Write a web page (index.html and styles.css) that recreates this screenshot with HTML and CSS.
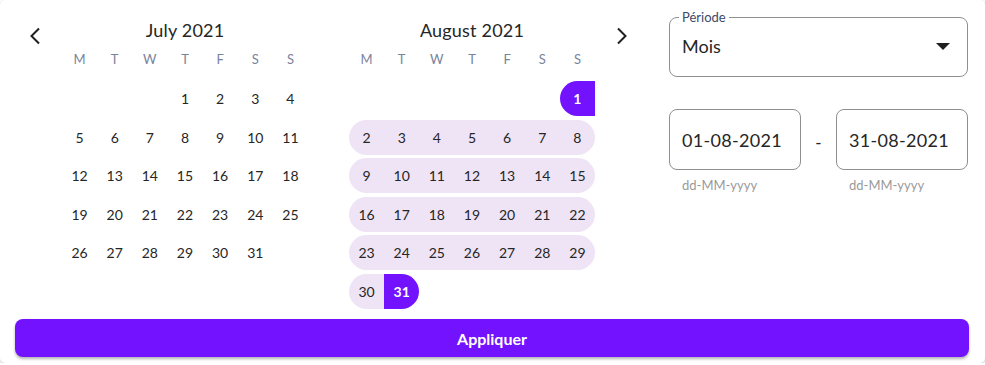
FILE: index.html
```html
<!DOCTYPE html>
<html lang="fr">
<head>
<meta charset="utf-8">
<title>Période</title>
<link rel="stylesheet" href="styles.css">
</head>
<body>
<div class="card">
  <div class="top">
    <button class="nav nav-prev" aria-label="Mois précédent">
      <svg width="12" height="18" viewBox="0 0 12 18"><path d="M10 1.5 L2.5 9 L10 16.5" fill="none" stroke="#1f1f1f" stroke-width="2"/></svg>
    </button>
    <div class="month">
      <div class="month-title">July 2021</div>
      <div class="weekdays"><span>M</span><span>T</span><span>W</span><span>T</span><span>F</span><span>S</span><span>S</span></div>
      <div class="days">
        <span></span><span></span><span></span><span class="d">1</span><span class="d">2</span><span class="d">3</span><span class="d">4</span>
        <span class="d">5</span><span class="d">6</span><span class="d">7</span><span class="d">8</span><span class="d">9</span><span class="d">10</span><span class="d">11</span>
        <span class="d">12</span><span class="d">13</span><span class="d">14</span><span class="d">15</span><span class="d">16</span><span class="d">17</span><span class="d">18</span>
        <span class="d">19</span><span class="d">20</span><span class="d">21</span><span class="d">22</span><span class="d">23</span><span class="d">24</span><span class="d">25</span>
        <span class="d">26</span><span class="d">27</span><span class="d">28</span><span class="d">29</span><span class="d">30</span><span class="d">31</span><span></span>
      </div>
    </div>
    <div class="month month-second">
      <div class="month-title">August 2021</div>
      <div class="weekdays"><span>M</span><span>T</span><span>W</span><span>T</span><span>F</span><span>S</span><span>S</span></div>
      <div class="days">
        <span></span><span></span><span></span><span></span><span></span><span></span><span class="d sel sel-start">1</span>
        <span class="d rng rs">2</span><span class="d rng">3</span><span class="d rng">4</span><span class="d rng">5</span><span class="d rng">6</span><span class="d rng">7</span><span class="d rng re">8</span>
        <span class="d rng rs">9</span><span class="d rng">10</span><span class="d rng">11</span><span class="d rng">12</span><span class="d rng">13</span><span class="d rng">14</span><span class="d rng re">15</span>
        <span class="d rng rs">16</span><span class="d rng">17</span><span class="d rng">18</span><span class="d rng">19</span><span class="d rng">20</span><span class="d rng">21</span><span class="d rng re">22</span>
        <span class="d rng rs">23</span><span class="d rng">24</span><span class="d rng">25</span><span class="d rng">26</span><span class="d rng">27</span><span class="d rng">28</span><span class="d rng re">29</span>
        <span class="d rng rs">30</span><span class="d sel sel-end">31</span><span></span><span></span><span></span><span></span><span></span>
      </div>
    </div>
    <button class="nav nav-next" aria-label="Mois suivant">
      <svg width="12" height="18" viewBox="0 0 12 18"><path d="M2 1.5 L9.5 9 L2 16.5" fill="none" stroke="#1f1f1f" stroke-width="2"/></svg>
    </button>
    <div class="panel">
      <fieldset class="select">
        <legend>Période</legend>
        <div class="select-row">
          <span class="select-value">Mois</span>
          <svg class="caret" width="14" height="7" viewBox="0 0 14 7"><path d="M0 0 L14 0 L7 7 Z" fill="#1f1f1f"/></svg>
        </div>
      </fieldset>
      <div class="dates">
        <div class="field">
          <div class="input">01-08-2021</div>
          <div class="helper">dd-MM-yyyy</div>
        </div>
        <div class="dash">-</div>
        <div class="field">
          <div class="input">31-08-2021</div>
          <div class="helper">dd-MM-yyyy</div>
        </div>
      </div>
    </div>
  </div>
  <button class="apply">Appliquer</button>
</div>
</body>
</html>
```

FILE: styles.css
```css
* { box-sizing: border-box; }
html, body { margin: 0; padding: 0; background: #ffffff; }
body {
  font-family: "Lato", "Noto Sans", "Liberation Sans", sans-serif;
  color: #262626;
}
.card {
  width: 985px;
  height: 363px;
  background: #fff;
  border-radius: 5px;
  box-shadow: 0 1px 3px rgba(0,0,0,0.25);
  padding: 0 16px 0 15px;
  overflow: hidden;
}
.top {
  display: flex;
  align-items: flex-start;
  height: 319px;
}
.nav {
  width: 40px;
  height: 40px;
  margin-top: 16px;
  border: 0;
  background: transparent;
  padding: 0;
  display: flex;
  align-items: center;
  justify-content: center;
}
.nav-prev { margin-right: 7px; }
.nav-next { margin-left: 7px; }
.month { width: 246px; }
.month-second { margin-left: 41px; }
.month-title {
  margin-top: 16px;
  height: 28px;
  line-height: 28px;
  text-align: center;
  font-size: 18px;
  letter-spacing: 0.2px;
  color: #262626;
}
.weekdays {
  display: grid;
  grid-template-columns: repeat(7, 1fr);
  height: 30px;
  margin-bottom: 7px;
}
.weekdays span {
  display: flex;
  align-items: center;
  justify-content: center;
  font-size: 13px;
  color: #7a839c;
}
.days {
  display: grid;
  grid-template-columns: repeat(7, 1fr);
  grid-auto-rows: 35px;
  row-gap: 3.6px;
}
.days span {
  display: flex;
  align-items: center;
  justify-content: center;
  font-size: 14px;
  color: #262626;
}
.days .rng { background: #efe4f5; }
.days .rs { border-radius: 17.5px 0 0 17.5px; }
.days .re { border-radius: 0 17.5px 17.5px 0; }
.days .sel {
  background: #7212ff;
  color: #fff;
  font-weight: 700;
}
.days .sel-start { border-radius: 17.5px 0 0 17.5px; }
.days .sel-end { border-radius: 0 17.5px 17.5px 0; }
.panel {
  margin-left: 27px;
  width: 299px;
  margin-top: 10px;
}
.select {
  margin: 0;
  padding: 0 12px 8px 9px;
  border: 1px solid #8f8f8f;
  border-radius: 8px;
  height: 67px;
}
.select legend {
  padding: 0 3px;
  font-size: 13px;
  line-height: 14px;
  color: #3c4a68;
}
.select-row {
  height: 44px;
  display: flex;
  align-items: center;
  justify-content: space-between;
  padding-left: 3px;
  padding-bottom: 1px;
}
.select-value { font-size: 18px; color: #262626; }
.caret { margin-right: 5px; margin-top: 2px; }
.dates {
  display: flex;
  align-items: flex-start;
  margin-top: 32px;
}
.field { width: 132px; }
.input {
  height: 61px;
  border: 1px solid #8f8f8f;
  border-radius: 8px;
  padding-left: 12px;
  display: flex;
  align-items: center;
  font-size: 18px;
  letter-spacing: 0.3px;
  color: #262626;
}
.helper {
  margin-top: 7px;
  padding-left: 13px;
  font-size: 13px;
  line-height: 16px;
  color: #9a9a9a;
}
.dash {
  width: 35px;
  height: 61px;
  display: flex;
  align-items: center;
  justify-content: center;
  padding-top: 6px;
  font-size: 17px;
}
.apply {
  display: block;
  width: 954px;
  height: 38px;
  border: 0;
  border-radius: 8px;
  background: #7212ff;
  color: #fff;
  font-family: inherit;
  font-size: 16px;
  font-weight: 700;
  box-shadow: 0 2px 3px rgba(0,0,0,0.3);
}
```
